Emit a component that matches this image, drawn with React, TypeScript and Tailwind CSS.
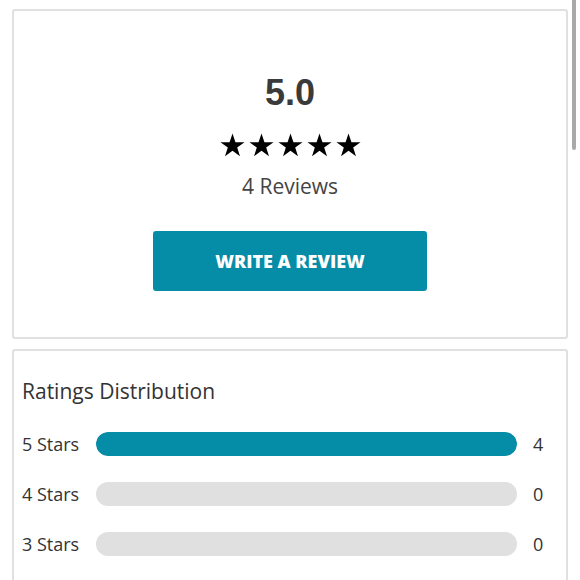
import React from "react";

const Star = () => (
  <svg width="25" height="24" viewBox="0 0 24 23" className="block">
    <path d="M12 0.5l2.82 8.28h8.74l-7.06 5.12 2.7 8.3L12 17.08 4.8 22.2l2.7-8.3L0.44 8.78h8.74z" fill="#000" />
  </svg>
);

const rows = [
  { label: "5 Stars", count: 4, pct: 100 },
  { label: "4 Stars", count: 0, pct: 0 },
  { label: "3 Stars", count: 0, pct: 0 },
];

const App = () => {
  return (
    <div
      className="relative w-[580px] h-[580px] overflow-hidden bg-white px-[12px] pt-[9px]"
      style={{ fontFamily: '"Open Sans", "Liberation Sans", sans-serif' }}
    >
      <div className="flex flex-col items-center border-2 border-[#e0e0e0] rounded-[3px] pt-[64px] pb-[46px]">
        <div className="text-[36px] leading-[36px] font-bold text-[#3a3a3a] font-['Liberation_Sans',sans-serif]">
          5.0
        </div>
        <div className="flex gap-[4px] mt-[22px]">
          <Star />
          <Star />
          <Star />
          <Star />
          <Star />
        </div>
        <div className="mt-[15px] text-[21px] leading-[28px] text-[#444]">4 Reviews</div>
        <button className="mt-[31px] w-[274px] h-[60px] rounded-[3px] bg-[#058da8] text-white text-[18px] font-extrabold">
          WRITE A REVIEW
        </button>
      </div>

      <div className="mt-[10px] border-2 border-[#e0e0e0] rounded-[3px] pl-[8px] pt-[26px] pb-[30px]">
        <div className="text-[21px] leading-[28px] text-[#333]">Ratings Distribution</div>
        <div className="mt-[27px] flex flex-col gap-[26px]">
          {rows.map((r) => (
            <div key={r.label} className="flex items-center h-[24px]">
              <div className="w-[74px] text-[18px] text-[#333] whitespace-nowrap">{r.label}</div>
              <div className="flex-1 h-[24px] rounded-full bg-[#e0e0e0] overflow-hidden">
                <div className="h-full rounded-full bg-[#058da8]" style={{ width: `${r.pct}%` }} />
              </div>
              <div className="w-[49px] pl-[16px] text-[18px] text-[#333]">{r.count}</div>
            </div>
          ))}
        </div>
      </div>

      <div className="absolute right-[4px] top-0 w-[4px] h-[150px] rounded-b-full bg-[#a9a9a9]" />
    </div>
  );
};

export default App;
